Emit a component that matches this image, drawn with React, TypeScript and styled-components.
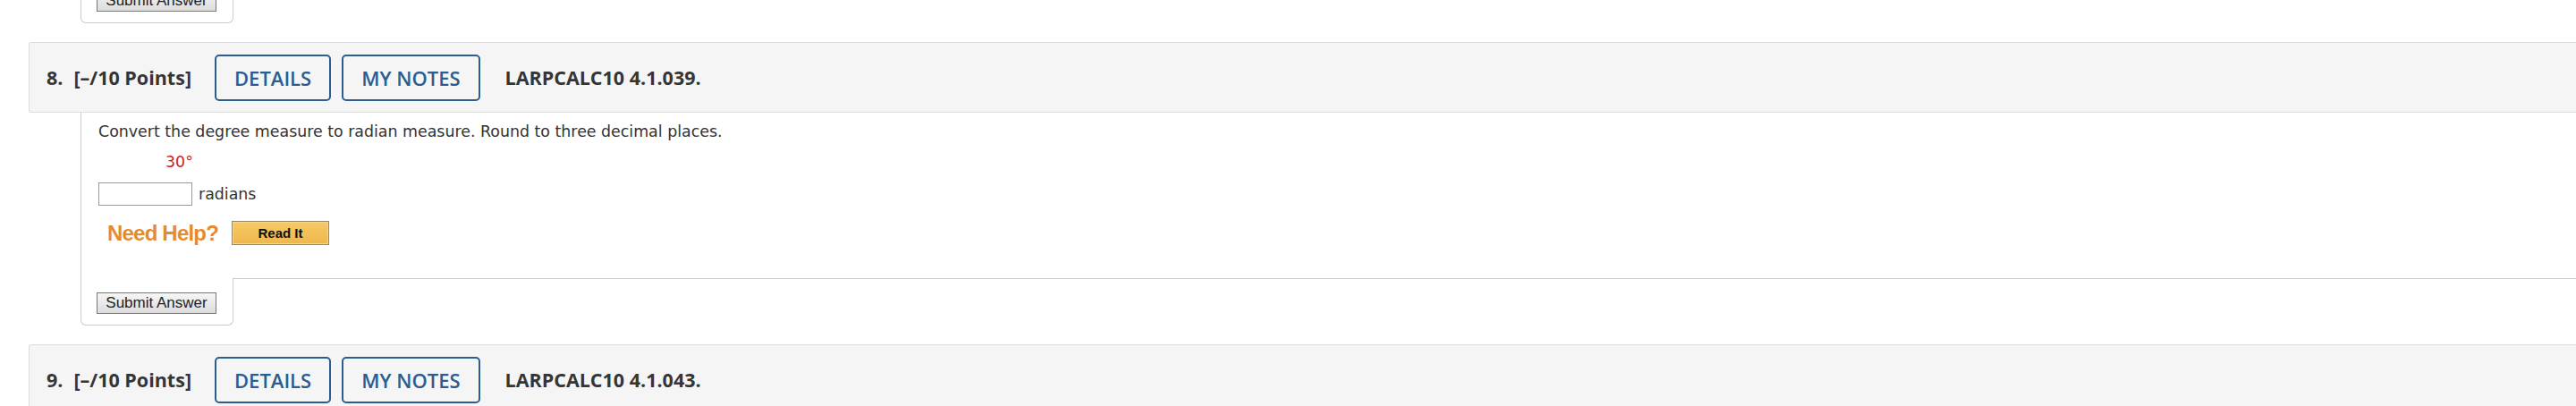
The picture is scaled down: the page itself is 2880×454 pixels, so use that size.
import React from "react";
import styled, { createGlobalStyle } from "styled-components";

const Global = createGlobalStyle`
  html, body { margin: 0; padding: 0; background: #fff; }
  body { overflow: hidden; }
`;

const Page = styled.div`
  padding-left: 32px;
  display: flex;
  flex-direction: column;
`;

const SubmitBox = styled.div<{ $first?: boolean }>`
  position: relative;
  margin-left: 58px;
  margin-top: ${(p) => (p.$first ? "-27px" : "-1px")};
  width: 171px;
  box-sizing: border-box;
  padding: 16px 0 12px 17px;
  background: #fff;
  border: 1px solid #cccccc;
  border-top: none;
  border-radius: 0 0 6px 6px;
`;

const SubmitButton = styled.button`
  display: block;
  width: 134px;
  height: 24px;
  padding: 0;
  box-sizing: border-box;
  border: 1px solid #777;
  border-radius: 0;
  background: linear-gradient(#f6f6f6, #dcdcdc);
  font-family: "Liberation Sans", Arial, sans-serif;
  font-size: 17px;
  color: #222;
  line-height: 22px;
`;

const Header = styled.div`
  margin-top: 21px;
  height: 79px;
  box-sizing: border-box;
  display: flex;
  align-items: center;
  padding-left: 19px;
  background: #f5f5f5;
  border: 1px solid #dcdcdc;
  border-right: none;
  border-radius: 3px 0 0 3px;
  font-family: "Open Sans", sans-serif;
  color: #353535;
`;

const Num = styled.span`
  font-size: 21.5px;
  font-weight: 700;
`;

const Points = styled.span`
  font-size: 21.5px;
  font-weight: 700;
  margin-left: 12px;
  margin-right: 26px;
`;

const HeaderButton = styled.button<{ $last?: boolean }>`
  height: 52px;
  box-sizing: border-box;
  padding: 0 20px;
  margin-right: ${(p) => (p.$last ? "28px" : "12px")};
  background: transparent;
  border: 2px solid #2b5d8e;
  border-radius: 5px;
  font-family: "Open Sans", sans-serif;
  font-size: 22px;
  font-weight: 600;
  color: #2b5d8e;
`;

const Code = styled.span`
  font-size: 21.5px;
  font-weight: 700;
`;

const Content = styled.div`
  margin-left: 58px;
  border-left: 1px solid #cccccc;
  border-bottom: 1px solid #cccccc;
  padding: 9px 0 37px 19px;
  font-family: "DejaVu Sans", Verdana, sans-serif;
  font-size: 17.4px;
  line-height: 24px;
  color: #333;
`;

const Prompt = styled.div``;

const Measure = styled.div`
  margin-top: 10px;
  padding-left: 75px;
  color: #d0211b;
`;

const AnswerRow = styled.div`
  margin-top: 11px;
  display: flex;
  align-items: center;
  gap: 7px;
`;

const AnswerInput = styled.input`
  width: 105px;
  height: 26px;
  box-sizing: border-box;
  border: 1px solid #9a9a9a;
  border-radius: 0;
  margin: 0;
  padding: 0 4px;
  background: #fff;
`;

const HelpRow = styled.div`
  margin-top: 17px;
  display: flex;
  align-items: center;
  height: 27px;
  padding-left: 10px;
`;

const NeedHelp = styled.span`
  font-family: "Liberation Sans", Arial, sans-serif;
  font-size: 24px;
  font-weight: 700;
  letter-spacing: -0.8px;
  color: #e68a2e;
  margin-right: 15px;
`;

const ReadIt = styled.button`
  width: 109px;
  height: 27px;
  box-sizing: border-box;
  padding: 0;
  border: 1px solid #c07d2c;
  border-radius: 0;
  box-shadow: inset 0 0 0 1px #f8d78a;
  background: linear-gradient(#f7c965, #efb74c);
  font-family: "Liberation Sans", Arial, sans-serif;
  font-size: 15px;
  font-weight: 700;
  color: #111;
`;

export default function App() {
  return (
    <>
      <Global />
      <Page>
        <SubmitBox $first>
          <SubmitButton>Submit Answer</SubmitButton>
        </SubmitBox>
        <Header>
          <Num>8.</Num>
          <Points>[–/10 Points]</Points>
          <HeaderButton>DETAILS</HeaderButton>
          <HeaderButton $last>MY NOTES</HeaderButton>
          <Code>LARPCALC10 4.1.039.</Code>
        </Header>
        <Content>
          <Prompt>
            Convert the degree measure to radian measure. Round to three decimal places.
          </Prompt>
          <Measure>30°</Measure>
          <AnswerRow>
            <AnswerInput type="text" />
            <span>radians</span>
          </AnswerRow>
          <HelpRow>
            <NeedHelp>Need Help?</NeedHelp>
            <ReadIt>Read It</ReadIt>
          </HelpRow>
        </Content>
        <SubmitBox>
          <SubmitButton>Submit Answer</SubmitButton>
        </SubmitBox>
        <Header>
          <Num>9.</Num>
          <Points>[–/10 Points]</Points>
          <HeaderButton>DETAILS</HeaderButton>
          <HeaderButton $last>MY NOTES</HeaderButton>
          <Code>LARPCALC10 4.1.043.</Code>
        </Header>
      </Page>
    </>
  );
}
